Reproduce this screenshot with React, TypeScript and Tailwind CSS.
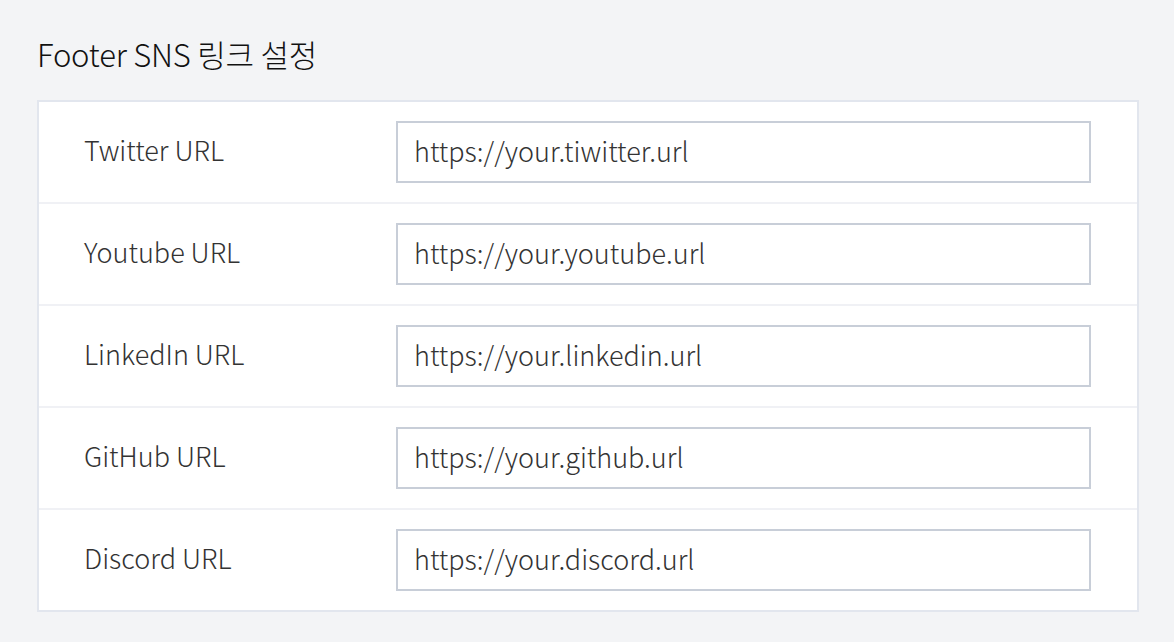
import React from 'react';

const links = [
  { label: 'Twitter URL', value: 'https://your.tiwitter.url' },
  { label: 'Youtube URL', value: 'https://your.youtube.url' },
  { label: 'LinkedIn URL', value: 'https://your.linkedin.url' },
  { label: 'GitHub URL', value: 'https://your.github.url' },
  { label: 'Discord URL', value: 'https://your.discord.url' },
];

export default function App() {
  return (
    <div
      className="w-[1174px] h-[642px] bg-[#f3f4f6] pl-[37px] pr-[35px] pt-[32px]"
      style={{ fontFamily: '"Noto Sans CJK KR", "Noto Sans", sans-serif' }}
    >
      <h2 className="text-[31px] leading-[44px] font-light text-[#111] tracking-[-0.2px]">Footer SNS 링크 설정</h2>

      <div className="mt-[24px] bg-white border-2 border-[#e2e6ee]">
        {links.map((link, i) => (
          <div
            key={link.label}
            className={`flex items-center ${i > 0 ? 'h-[102px] border-t-2 border-[#f0f1f5]' : 'h-[100px]'}`}
          >
            <label className="w-[357px] pl-[45px] pb-[4px] text-[27px] font-light text-[#333]">{link.label}</label>
            <input
              type="text"
              defaultValue={link.value}
              className="w-[695px] h-[62px] border-2 border-[#c8ced8] pl-[16px] pr-[16px] pb-[4px] text-[27px] font-light text-[#333] outline-none"
              style={{ fontFamily: '"Noto Sans CJK KR", "Noto Sans", sans-serif' }}
            />
          </div>
        ))}
      </div>
    </div>
  );
}
